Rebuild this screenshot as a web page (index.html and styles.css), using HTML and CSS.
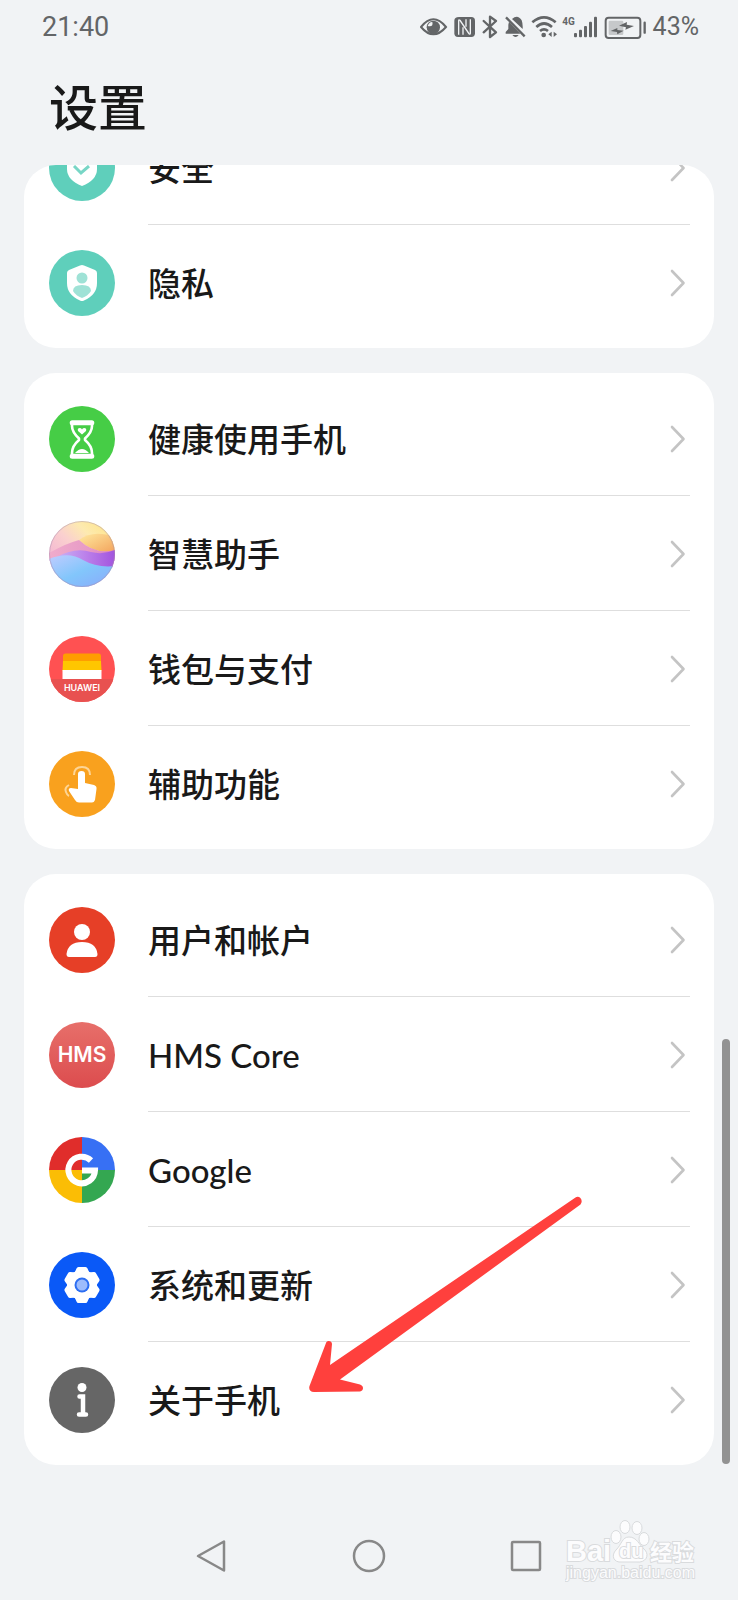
FILE: index.html
```html
<!DOCTYPE html>
<html lang="zh-CN">
<head>
<meta charset="utf-8">
<meta name="viewport" content="width=device-width, initial-scale=1">
<title>设置</title>
<link rel="stylesheet" href="styles.css">
</head>
<body>
<svg class="defs" aria-hidden="true">
  <defs>
    <symbol id="chevron" viewBox="0 0 16 30"><path d="M2 3l11.500 12L2 27" fill="none" stroke="#c4c4c4" stroke-width="2.600" stroke-linecap="round" stroke-linejoin="round"/></symbol>
  </defs>
</svg>
<div class="screen">
  <header class="status">
    <time class="clock">21:40</time>
    <div class="indicators">
      <svg class="signals" viewBox="60 36 681 78" aria-hidden="true">
        <g fill="none" stroke="#636567">
          <path d="M63 75Q100 29 138 75Q100 119 63 75Z" stroke-width="6"/>
          <path d="M251 57L288 91L270 105V44L288 57L251 91" stroke-width="7" stroke-linejoin="round" stroke-linecap="round"/>
          <path d="M397 61Q432 31 467 61M409 75Q432 54 456 75M420 87Q432 77 444 87" stroke-width="8"/>
          <rect x="617" y="47" width="104" height="61" rx="9" stroke-width="6"/>
          <path d="M734 62V92" stroke-width="7" stroke-linecap="round"/>
          <path d="M318 46L374 103" stroke-width="7"/>
        </g>
        <g fill="#636567">
          <circle cx="100" cy="76" r="20"/>
          <path d="M177 45H214Q225 45 225 56V94Q225 105 214 105H174Q163 105 163 94V56Q163 45 177 45Z"/>
          <path d="M327 59L361 95H317V90L325 81V68ZM336 51Q353 35 365 55Q369 66 368 81ZM337 99H356Q347 111 337 99Z"/>
          <circle cx="431" cy="99" r="7"/>
          <path d="M445 97L455 89V105ZM471 97L461 89V105Z"/>
          <rect x="522" y="93" width="9" height="13" rx="3"/><rect x="537" y="83" width="9" height="23" rx="3"/><rect x="552" y="72" width="9" height="34" rx="3"/><rect x="567" y="59" width="9" height="47" rx="3"/><rect x="582" y="44" width="9" height="62" rx="3"/>
        </g>
        <path d="M97 60Q101 76 83 72Q88 59 97 60Z" fill="#f1f3f5"/>
        <path d="M176 98V56Q176 52 180 55L207 95Q211 98 211 94V52M189 76V98M198 52V74" fill="none" stroke="#f1f3f5" stroke-width="4"/>
        <rect x="626" y="56" width="44" height="43" rx="4" fill="#c6c8ca"/>
        <path d="M657 71L681 60L680 68L702 72L676 83L678 76ZM632 87L652 78V84L671 86L652 97L651 90Z" fill="#636567"/>
        <text class="net" x="487" y="70">4G</text>
      </svg>
      <span class="battery">43%</span>
    </div>
  </header>
  <h1 class="title">设置</h1>

  <main class="viewport">
    <div class="groups">
      <ul class="card">
        <li><a class="row" href="#security">
          <svg class="icon" viewBox="0 0 66 66" aria-hidden="true"><circle cx="33" cy="33" r="33" fill="#5fcfbb"/><path d="M33 15L48 20V34Q48 45 33 51Q18 45 18 34V20Z" fill="#fff"/><path d="M25 31L32 38L40 31" fill="none" stroke="#78d6c6" stroke-width="3"/></svg>
          <span class="body"><span class="label">安全</span><svg class="chev"><use href="#chevron"/></svg></span></a></li>
        <li><a class="row" href="#privacy">
          <svg class="icon" viewBox="0 0 66 66" aria-hidden="true"><circle cx="33" cy="33" r="33" fill="#5fcfbb"/><path d="M31 15.500Q33 14.500 35 15.500L46 20Q48 21 48 23V33Q48 45 35 50.500Q33 51.500 31 50.500Q18 45 18 33V23Q18 21 20 20Z" fill="#fff"/><circle cx="33" cy="28" r="5.500" fill="#9fe2d6"/><path d="M24 41Q24 35 33 35Q42 35 42 41Q39 46 33 48Q27 46 24 41Z" fill="#9fe2d6"/></svg>
          <span class="body"><span class="label">隐私</span><svg class="chev"><use href="#chevron"/></svg></span></a></li>
      </ul>

      <ul class="card">
        <li><a class="row" href="#balance">
          <svg class="icon" viewBox="0 0 66 66" aria-hidden="true"><circle cx="33" cy="33" r="33" fill="#46cd46"/><g fill="none" stroke="#fff" stroke-width="2.600" stroke-linejoin="round"><path d="M23 17V20Q23 26 30 32.500V34Q23 40 23 47V50M43 17V20Q43 26 36 32.500V34Q43 40 43 47V50"/><rect x="22" y="15.500" width="22" height="2.500" rx="1.200"/><rect x="22" y="49" width="22" height="2.500" rx="1.200"/></g><path d="M33 28.500L29 25Q28 22 31 22Q32.500 22 33 23.500Q33.500 22 35 22Q38 22 37 25ZM26 47Q33 39 40 47Z" fill="#fff"/></svg>
          <span class="body"><span class="label">健康使用手机</span><svg class="chev"><use href="#chevron"/></svg></span></a></li>
        <li><a class="row" href="#assistant">
          <svg class="icon" viewBox="0 0 66 66" aria-hidden="true">
            <defs>
              <clipPath id="orb"><circle cx="33" cy="33" r="33"/></clipPath>
              <linearGradient id="sky" x1="0" y1="1" x2="1" y2="0"><stop offset=".2" stop-color="#f3b4d2"/><stop offset=".5" stop-color="#fad0cf"/><stop offset=".7" stop-color="#fdeab0"/><stop offset="1" stop-color="#ffe27c"/></linearGradient>
              <linearGradient id="sun" x1="0" y1="0" x2="1" y2="1"><stop offset="0" stop-color="#ffeaa0"/><stop offset="1" stop-color="#f3a35c"/></linearGradient>
              <linearGradient id="rose" x1="0" y1="0" x2="1" y2="0"><stop offset="0" stop-color="#f0accb"/><stop offset=".6" stop-color="#e79ac6"/><stop offset="1" stop-color="#d67bc8"/></linearGradient>
              <linearGradient id="violet" x1="0" y1="0" x2="1" y2="0"><stop offset="0" stop-color="#c9b2f4"/><stop offset=".5" stop-color="#bb80ea"/><stop offset="1" stop-color="#a254de"/></linearGradient>
              <linearGradient id="sea" x1="0" y1="0" x2="1" y2="1"><stop offset="0" stop-color="#c0ccff"/><stop offset=".5" stop-color="#82c6fb"/><stop offset="1" stop-color="#8aa8fb"/></linearGradient>
            </defs>
            <g clip-path="url(#orb)"><path d="M0 0H66V66H0Z" fill="url(#sky)"/><path d="M30 19Q44 8 66 16V31Q44 33 30 19Z" fill="url(#sun)"/><path d="M0 32Q18 22 30 19Q46 34 66 29V44H0Z" fill="url(#rose)"/><path d="M8 36Q26 26 42 31Q54 34 66 29V47H30Z" fill="url(#violet)"/><path d="M0 38Q20 30 34 39Q48 47 66 45V66H0Z" fill="url(#sea)"/></g>
            <circle cx="33" cy="33" r="32.500" fill="none" stroke="#a58fb0" stroke-opacity=".45"/>
          </svg>
          <span class="body"><span class="label">智慧助手</span><svg class="chev"><use href="#chevron"/></svg></span></a></li>
        <li><a class="row" href="#wallet">
          <svg class="icon" viewBox="0 0 66 66" aria-hidden="true"><defs><clipPath id="disc"><circle cx="33" cy="33" r="33"/></clipPath></defs><g clip-path="url(#disc)"><path d="M0 0H66V66H0Z" fill="#ff5152"/><path d="M0 43H66V66H0Z" fill="#e85150"/></g><path d="M14 20Q14 17.500 16.500 17.500H50Q52 17.500 52 20V26H14Z" fill="#ff9d00"/><path d="M14 25H52L52.500 35H13.500Z" fill="#ffc600"/><path d="M13.500 34H52.500V43H13.500Z" fill="#fff"/><text class="brand" x="33" y="55">HUAWEI</text></svg>
          <span class="body"><span class="label">钱包与支付</span><svg class="chev"><use href="#chevron"/></svg></span></a></li>
        <li><a class="row" href="#accessibility">
          <svg class="icon" viewBox="0 0 66 66" aria-hidden="true"><circle cx="33" cy="33" r="33" fill="#f9a11e"/><path d="M29 23Q29 20 32.500 20Q36 20 36 23V32L45 34Q48 35 47.500 38L46 49Q45 51.500 43 51.500H30Q27.500 51.500 26 49L20 40Q19 37 22 37L29 38Z" fill="#fff"/><path d="M25 24Q25 16 33 16Q41 16 41 24M20 34Q15 37 17 41Q18 44 20 45" fill="none" stroke="#fdd596" stroke-width="2"/></svg>
          <span class="body"><span class="label">辅助功能</span><svg class="chev"><use href="#chevron"/></svg></span></a></li>
      </ul>

      <ul class="card">
        <li><a class="row" href="#accounts">
          <svg class="icon" viewBox="0 0 66 66" aria-hidden="true"><circle cx="33" cy="33" r="33" fill="#e63f27"/><circle cx="33" cy="25" r="8" fill="#fff"/><path d="M17.500 47Q19 35 33 35Q47 35 48.500 47Q48.500 50 46 50H20Q17.500 50 17.500 47Z" fill="#fff"/></svg>
          <span class="body"><span class="label">用户和帐户</span><svg class="chev"><use href="#chevron"/></svg></span></a></li>
        <li><a class="row" href="#hms">
          <svg class="icon" viewBox="0 0 66 66" aria-hidden="true"><defs><linearGradient id="coral" x1="0" y1="0" x2="0" y2="1"><stop offset="0" stop-color="#e76f6a"/><stop offset="1" stop-color="#dc4c4e"/></linearGradient></defs><circle cx="33" cy="33" r="33" fill="url(#coral)"/><text class="hms" x="33" y="40">HMS</text></svg>
          <span class="body"><span class="label">HMS Core</span><svg class="chev"><use href="#chevron"/></svg></span></a></li>
        <li><a class="row" href="#google">
          <svg class="icon" viewBox="0 0 66 66" aria-hidden="true"><path d="M33 33V0A33 33 0 0 0 0 33Z" fill="#e02d2b"/><path d="M33 33H66A33 33 0 0 0 33 0Z" fill="#3770f4"/><path d="M33 33V66A33 33 0 0 0 66 33Z" fill="#34a751"/><path d="M33 33H0A33 33 0 0 0 33 66Z" fill="#fbbd05"/><path d="M42 23.500A13.300 13.300 0 1 0 46 33.500H33" fill="none" stroke="#fff" stroke-width="6"/></svg>
          <span class="body"><span class="label">Google</span><svg class="chev"><use href="#chevron"/></svg></span></a></li>
        <li><a class="row" href="#system">
          <svg class="icon" viewBox="0 0 66 66" aria-hidden="true"><circle cx="33" cy="33" r="33" fill="#0a59f7"/><g transform="translate(33 33)" fill="#fff"><circle r="15"/><path id="tooth" d="M-8 -11L-5.500 -16.500Q-5 -18 -3.500 -18H3.500Q5 -18 5.500 -16.500L8 -11Z"/><use href="#tooth" transform="rotate(60)"/><use href="#tooth" transform="rotate(120)"/><use href="#tooth" transform="rotate(180)"/><use href="#tooth" transform="rotate(240)"/><use href="#tooth" transform="rotate(300)"/><circle r="7.500" fill="#2c6ef2"/><circle r="5.500" fill="#9dbcfc"/></g></svg>
          <span class="body"><span class="label">系统和更新</span><svg class="chev"><use href="#chevron"/></svg></span></a></li>
        <li><a class="row" href="#about">
          <svg class="icon" viewBox="0 0 66 66" aria-hidden="true"><circle cx="33" cy="33" r="33" fill="#666"/><circle cx="33" cy="20.500" r="4.500" fill="#fff"/><path d="M30.500 29.500H34V47.500M30 47.500H37" fill="none" stroke="#fff" stroke-width="4.500" stroke-linecap="round"/></svg>
          <span class="body"><span class="label">关于手机</span><svg class="chev"><use href="#chevron"/></svg></span></a>
          <svg class="pointer" viewBox="0 0 300 220" aria-hidden="true"><path d="M275.500 16.500C279 14 284 19 280.500 23.500L40 198.500L60 203.500C64 205 64 209.500 60 210.500L14 211C10 211 8.500 208 9.500 205L26 162C27 159 32 159.500 32 163L30 184Z" fill="#ff403d"/></svg></li>
      </ul>
    </div>
  </main>

  <nav class="keys" aria-label="导航">
    <button type="button" aria-label="返回"><svg viewBox="0 0 36 36"><path d="M30 3.500V32.500L4 18Z"/></svg></button>
    <button type="button" aria-label="主页"><svg viewBox="0 0 36 36"><circle cx="18" cy="18" r="15"/></svg></button>
    <button type="button" aria-label="最近"><svg viewBox="0 0 36 36"><rect x="4" y="4" width="28" height="28" rx="1"/></svg></button>
  </nav>
  <span class="scrollbar"></span>
  <svg class="watermark" viewBox="0 0 140 70" aria-hidden="true">
    <g class="mark">
      <text class="wm-big" x="1" y="45">Bai</text>
      <ellipse cx="51" cy="21" rx="5" ry="6.500"/><ellipse cx="60" cy="11" rx="5" ry="6.500"/><ellipse cx="72" cy="12" rx="5" ry="6.500"/><ellipse cx="79" cy="23" rx="5" ry="6.500"/>
      <path d="M64 21C72 21 74 29 80 34C85 40 80 47 72 46H57C48 47 46 39 51 34C57 28 57 21 64 21Z"/>
      <text class="wm-du" x="54" y="42">du</text>
      <text class="wm-cjk" x="85" y="44">经验</text>
      <text class="wm-url" x="1" y="62">jingyan.baidu.com</text>
    </g>
  </svg>
</div>
</body>
</html>
```
FILE: styles.css
```css
* { box-sizing: border-box; }

body {
  margin: 0;
  background: #f1f3f5;
  color: #191919;
  font-family: Lato, "Noto Sans CJK SC", sans-serif;
}

.defs { position: absolute; width: 0; height: 0; }

.screen {
  position: relative;
  display: flex;
  flex-direction: column;
  min-height: 100vh;
}

.status {
  display: flex;
  align-items: center;
  justify-content: space-between;
  height: 52px;
  padding: 2px 39px 0 42px;
  color: #636567;
  font-family: Roboto, sans-serif;
}

.clock { font-size: 27px; line-height: 32px; }

.indicators { display: flex; align-items: center; gap: 6px; }
.signals { width: 227px; height: 26px; }
.battery { font-size: 25px; line-height: 32px; }
.net { font: 700 30px Roboto, sans-serif; fill: #636567; }

.title {
  margin: 0;
  padding: 21px 49px 28px;
  font-family: "Noto Sans CJK SC", sans-serif;
  font-size: 49px;
  line-height: 64px;
  font-weight: 500;
}

.viewport {
  margin: 0 24px 47px;
  overflow: hidden;
  border-radius: 32px 32px 0 0;
}

/* The list is scrolled part of the way through its first group. */
.groups {
  display: flex;
  flex-direction: column;
  gap: 25px;
  margin-top: -63px;
}

.card {
  margin: 0;
  padding: 8px 0;
  list-style: none;
  background: #fff;
  border-radius: 32px;
}

.card li { position: relative; }

.row {
  display: flex;
  align-items: center;
  gap: 33px;
  padding: 0 24px 0 25px;
  color: inherit;
  text-decoration: none;
}

.icon { flex: none; width: 66px; height: 66px; }

.body {
  flex: 1;
  display: flex;
  align-items: center;
  justify-content: space-between;
  height: 115px;
  padding: 2px 4px 0 0;
  border-bottom: 1px solid #dedede;
}

li:last-child .body { border-bottom-color: transparent; }

.label { font-size: 33px; line-height: 48px; font-weight: 500; }
.chev { flex: none; width: 16px; height: 30px; }

.brand { font: 600 9px Inter, sans-serif; fill: #fff; text-anchor: middle; }
.hms { font: 600 21px Inter, sans-serif; fill: #fff; text-anchor: middle; }

.pointer {
  position: absolute;
  left: 276px;
  bottom: 56px;
  width: 300px;
  height: 220px;
  pointer-events: none;
}

.keys {
  display: grid;
  grid-template-columns: repeat(3, 1fr);
  height: 88px;
  margin-top: auto;
  padding: 0 18%;
}

.keys button {
  display: flex;
  align-items: center;
  justify-content: center;
  padding: 0;
  border: 0;
  background: none;
}

.keys svg {
  width: 36px;
  height: 36px;
  fill: none;
  stroke: #888;
  stroke-width: 2.5;
  stroke-linejoin: round;
}

.scrollbar {
  position: absolute;
  right: 8px;
  bottom: 136px;
  width: 8px;
  height: 425px;
  border-radius: 4px;
  background: #929292;
}

.watermark {
  position: absolute;
  right: 33px;
  bottom: 14px;
  width: 140px;
  height: 70px;
}

.mark { fill: #fcfcfd; stroke: #d9dbdd; stroke-width: 1; }
.mark text { paint-order: stroke; stroke-width: 2; }
.wm-big { font: 700 29px "Liberation Sans", sans-serif; }
.wm-du { font: 700 20px "Liberation Sans", sans-serif; }
.wm-cjk { font: 700 22px "Noto Sans CJK SC", sans-serif; }
.wm-url { font: 400 16px "Liberation Sans", sans-serif; }
```
